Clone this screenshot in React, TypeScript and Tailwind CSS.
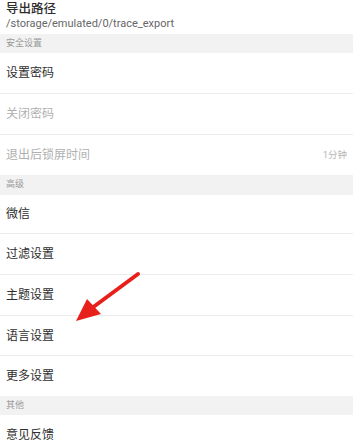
const FONT = { fontFamily: '"Roboto", "Noto Sans CJK SC", sans-serif' };

type Row = { label: string; h: string; muted?: boolean; value?: string; last?: boolean };

const SECURITY: Row[] = [
  { label: "设置密码", h: "h-[41px]" },
  { label: "关闭密码", h: "h-[41px]", muted: true },
  { label: "退出后锁屏时间", h: "h-[40px]", muted: true, value: "1分钟", last: true },
];

const ADVANCED: Row[] = [
  { label: "微信", h: "h-[39px]" },
  { label: "过滤设置", h: "h-[41px]" },
  { label: "主题设置", h: "h-[41px]" },
  { label: "语言设置", h: "h-[40px]" },
  { label: "更多设置", h: "h-[40px]", last: true },
];

const OTHER: Row[] = [{ label: "意见反馈", h: "h-[40px]", last: true }];

function SectionHeader({ title, h }: { title: string; h: string }) {
  return (
    <div className={`flex items-center bg-[#f2f2f2] pl-[6px] text-[9px] text-[#9a9a9a] ${h}`}>
      {title}
    </div>
  );
}

function SettingRow({ row }: { row: Row }) {
  return (
    <div
      className={`flex items-center justify-between pl-[6px] pr-[6px] ${row.h} ${
        row.last ? "" : "border-b border-[#ececec]"
      }`}
    >
      <span className={`text-[12px] ${row.muted ? "text-[#b0b0b0]" : "text-[#2e2e2e]"}`}>{row.label}</span>
      {row.value && <span className="text-[9.5px] text-[#b5b5b5]">{row.value}</span>}
    </div>
  );
}

export default function App() {
  return (
    <div className="relative h-[446px] w-[353px] overflow-hidden bg-white" style={FONT}>
      <div className="flex h-[34px] flex-col pl-[6px] pt-[1px]">
        <div className="text-[12.5px] font-medium leading-[15px] text-[#2e2e2e]">导出路径</div>
        <div className="text-[11px] leading-[16px] text-[#666]">/storage/emulated/0/trace_export</div>
      </div>

      <SectionHeader title="安全设置" h="h-[19px]" />
      {SECURITY.map((r) => (
        <SettingRow key={r.label} row={r} />
      ))}

      <SectionHeader title="高级" h="h-[20px]" />
      {ADVANCED.map((r) => (
        <SettingRow key={r.label} row={r} />
      ))}

      <SectionHeader title="其他" h="h-[19px]" />
      {OTHER.map((r) => (
        <SettingRow key={r.label} row={r} />
      ))}

      {/* red annotation arrow */}
      <svg className="absolute left-0 top-0" width="353" height="446" viewBox="0 0 353 446">
        <line x1="138" y1="274" x2="92" y2="308" stroke="#e8201c" strokeWidth="4" strokeLinecap="round" />
        <polygon points="76,321 87,299 101,314" fill="#e8201c" />
      </svg>
    </div>
  );
}
